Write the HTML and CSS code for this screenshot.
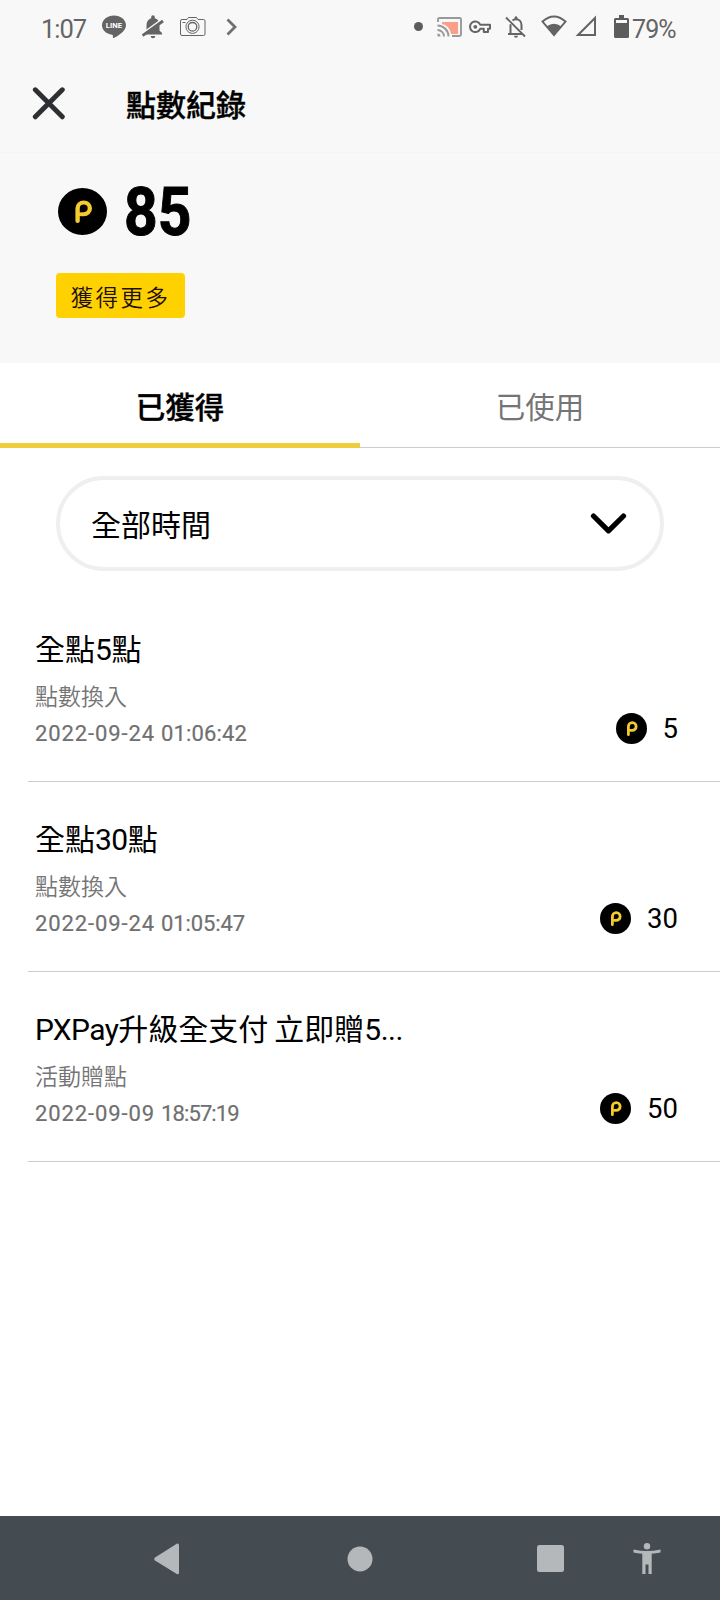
FILE: index.html
```html
<!DOCTYPE html>
<html lang="zh-Hant">
<head>
<meta charset="utf-8">
<title>點數紀錄</title>
<link rel="stylesheet" href="styles.css">
</head>
<body>
<svg class="defs" width="0" height="0">
  <symbol id="coin" viewBox="0 0 48 48" preserveAspectRatio="none">
    <circle cx="24" cy="24" r="24" fill="#000"/>
    <path d="M19.200 33.600V20.800a6 6 0 1 1 6 6h-2.700" fill="none" stroke="#f4ca2e" stroke-width="4.300" stroke-linecap="round" stroke-linejoin="round"/>
  </symbol>
</svg>
<div class="screen">
  <div class="status">
    <div class="status-left">
      <span class="clock">1:07</span>
      <svg class="i-line" width="24" height="24" viewBox="0 0 24 24"><path d="M12 .5C5.400.5 0 4.800 0 10.200c0 4.800 4.300 8.700 10 9.500.9.200 1 .7.900 1.800-.1 1.200 0 1.700.8 1.400C14.500 21.800 24 16.500 24 10.200 24 4.800 18.600.5 12 .5z" fill="#646464"/><text x="12" y="13" text-anchor="middle" class="line-text">LINE</text></svg>
      <svg class="i-bell" width="22" height="24" viewBox="0 0 22 24"><path d="M2 19.500 4.500 15.500V10.500C4.500 6.500 6.300 4 9.200 3.200V2a1.800 1.800 0 0 1 3.600 0v1.200c2.700.7 4.700 2.900 4.700 7V15.500L20 18v1.500zM8.700 21h4.600a2.300 2.300 0 0 1-4.600 0z" fill="#646464"/><path d="M1.500 17.800 20.500 4" stroke="#f8f8f8" stroke-width="2"/><path d="M.5 20.500 21 6" stroke="#646464" stroke-width="2.800"/></svg>
      <svg class="i-cam" width="26" height="20" viewBox="0 0 26 20" fill="none" stroke="#646464" stroke-width="1"><path d="M2 2.500H7l1.500-2h8L18 2.500h5.500q1.500 0 1.500 1.500V17q0 1.500-1.500 1.500H2Q.5 18.500.5 17V4Q.5 2.500 2 2.500zM2.500 5.500h3"/><circle cx="12.500" cy="9.800" r="6.600"/><circle cx="12.500" cy="9.800" r="4.300" stroke-width="1.300"/></svg>
      <svg class="i-more" width="12" height="18" viewBox="0 0 12 18" fill="none" stroke="#707070" stroke-width="2.800"><path d="M1.500 1.500 9 9l-7.500 7.500"/></svg>
    </div>
    <div class="status-right">
      <span class="dot"></span>
      <svg class="i-cast" width="25" height="21" viewBox="0 0 25 21"><path d="M5 5h16v12h-7C13.500 12 10 8 5 7z" fill="#fb9f88"/><path d="M1 5V2.500Q1 1 2.500 1h20Q24 1 24 2.500v15q0 1.500-1.500 1.500H15M.5 8.500A11 11 0 0 1 11.500 19.500M.5 13A6.500 6.500 0 0 1 7 19.500" fill="none" stroke="#999" stroke-width="1.900"/><path d="M.5 16.500a3 3 0 0 1 3 3h-3z" fill="#999"/></svg>
      <svg class="i-key" width="22" height="14" viewBox="0 0 22 14"><path d="M11.200 4.700H21v4.100h-2V12h-4.200V8.800h-3.600A5.300 5.300 0 1 1 11.200 4.700z" fill="none" stroke="#646464" stroke-width="2" stroke-linejoin="round"/><circle cx="6.300" cy="6.800" r="1.900" fill="#646464"/></svg>
      <svg class="i-mute" width="21" height="22" viewBox="0 0 21 22"><path d="M5.500 18V8.200M7.500 4.500C9 3.200 9.500 3.200 11 3.200c3.300 0 5.500 2.600 5.500 6V14M3 18h14" fill="none" stroke="#646464" stroke-width="2"/><path d="M9.500 3V1.800a1.500 1.500 0 0 1 3 0V3zM9 19.700h4a2 2 0 0 1-4 0z" fill="#646464"/><path d="m1 1.500 19 19" stroke="#646464" stroke-width="1.900"/></svg>
      <svg class="i-wifi" width="26" height="22" viewBox="0 0 26 22"><path d="M1.500 6.500Q13-3.500 24.500 6.500L13 20z" fill="none" stroke="#646464" stroke-width="1.900"/><path d="M5.500 11.500q7.500-5.500 15 0L13 21z" fill="#646464"/></svg>
      <svg class="i-cell" width="22" height="22" viewBox="0 0 22 22"><path d="M20 3v17H3z" fill="none" stroke="#646464" stroke-width="2"/></svg>
      <svg class="i-batt" width="15" height="24" viewBox="0 0 15 24"><path d="M5 0h5v3h3.500Q15 3 15 4.500v17Q15 23 13.500 23h-12Q0 23 0 21.500v-17Q0 3 1.500 3H5z" fill="#5c5c5c"/><path d="M2 5h11v3H2z" fill="#f8f8f8"/></svg>
      <span class="percent">79%</span>
    </div>
  </div>
  <header class="header">
    <svg class="close" width="33" height="33" viewBox="0 0 33 33"><path d="m3.300 2.800 27 27m0-27-27 27" stroke="#2d2f32" stroke-width="4.900" stroke-linecap="round"/></svg>
    <h1 class="title">點數紀錄</h1>
  </header>
  <section class="summary">
    <div class="balance">
      <svg class="coin-large"><use href="#coin"/></svg>
      <span class="balance-value">85</span>
    </div>
    <button class="more">獲得更多</button>
  </section>
  <nav class="tabs">
    <div class="tab active">已獲得</div>
    <div class="tab">已使用</div>
  </nav>
  <div class="select">
    <span class="select-label">全部時間</span>
    <svg width="37" height="22" viewBox="0 0 37 22"><path d="m3.500 3 15 14.800L33.500 3" fill="none" stroke="#000" stroke-width="5.200" stroke-linecap="round" stroke-linejoin="round"/></svg>
  </div>
  <main class="list">
    <article class="item">
      <div class="info">
        <h2 class="name">全點<span class="latin">5</span>點</h2>
        <div class="kind">點數換入</div>
        <div class="when"><span class="date">2022-09-24</span><span class="time">01:06:42</span></div>
      </div>
      <div class="points"><svg class="coin"><use href="#coin"/></svg><span>5</span></div>
    </article>
    <article class="item">
      <div class="info">
        <h2 class="name">全點<span class="latin">30</span>點</h2>
        <div class="kind">點數換入</div>
        <div class="when"><span class="date">2022-09-24</span><span class="time tight">01:05:47</span></div>
      </div>
      <div class="points"><svg class="coin"><use href="#coin"/></svg><span>30</span></div>
    </article>
    <article class="item">
      <div class="info">
        <h2 class="name"><span class="brand">PXPay</span>升級全支付 <span class="offer">立即贈<span class="latin">5...</span></span></h2>
        <div class="kind">活動贈點</div>
        <div class="when"><span class="date">2022-09-09</span><span class="time tighter">18:57:19</span></div>
      </div>
      <div class="points"><svg class="coin"><use href="#coin"/></svg><span>50</span></div>
    </article>
  </main>
  <footer class="navbar">
    <svg class="n-back" width="26" height="32" viewBox="0 0 26 32"><path d="M1 14.500 22.800.8Q25 0 25 2.500v27q0 2.500-2.200 1.500L1 17.500Q-.5 16 1 14.500z"/></svg>
    <svg class="n-home" width="26" height="26" viewBox="0 0 26 26"><circle cx="13" cy="13" r="12.500"/></svg>
    <svg class="n-recent" width="27" height="27" viewBox="0 0 27 27"><rect width="27" height="27" rx="2.500"/></svg>
    <svg class="n-access" width="28" height="32" viewBox="0 0 28 32"><circle cx="14" cy="3.200" r="3.200"/><path d="M.5 6.500q13.500 3 27 0v3Q23 10.500 18.700 10.800V31h-3.200V21.500h-3V31H9.300V10.800Q4.500 10.500.5 9.500z"/></svg>
  </footer>
</div>
</body>
</html>
```
FILE: styles.css
```css
* { box-sizing: border-box; }
body { margin: 0; background: #fff; font-family: Roboto, "Noto Sans CJK TC", sans-serif; color: #000; }
h1, h2 { margin: 0; }
svg { display: block; flex: none; }
.defs { position: absolute; }
.screen { width: 720px; height: 1600px; display: flex; flex-direction: column; background: #fff; }

.status { height: 56px; background: #f8f8f8; display: flex; justify-content: space-between; padding: 0 42px 0 41px; color: #646464; }
.status-left, .status-right { display: flex; align-items: center; height: 54px; }
.clock { font-size: 25.500px; letter-spacing: -1px; width: 61px; padding-top: 4px; }
.line-text { font: 700 7.800px Roboto, sans-serif; fill: #fff; }
.i-bell { margin-left: 16px; }
.i-cam { margin-left: 16px; }
.i-more { margin-left: 20px; }
.dot { width: 9px; height: 9px; border-radius: 50%; background: #5c5c5c; margin-right: 14px; margin-top: -2px; }
.i-key { margin-left: 7px; }
.i-mute { margin-left: 14px; }
.i-wifi { margin-left: 15px; margin-top: -2px; }
.i-cell { margin-left: 8px; margin-top: -2px; }
.i-batt { margin-left: 17px; margin-top: -1px; }
.percent { font-size: 25px; letter-spacing: -.9px; width: 46px; margin-left: 3px; padding-top: 5px; white-space: nowrap; }

.header { height: 96px; background: #f8f8f8; display: flex; align-items: flex-start; padding: 31px 0 0 32px; gap: 61px; }
.title { font-size: 30px; font-weight: 500; line-height: 38px; -webkit-text-stroke: .4px #000; }
.summary { height: 211px; background: #f8f8f8; border-top: 1px solid #f5f5f5; padding: 30px 0 0 56px; }
.balance { height: 56px; display: flex; align-items: center; gap: 17px; padding-left: 2px; }
.coin-large { width: 49px; height: 47px; }
.balance-value { font-size: 66px; font-weight: 700; line-height: 56px; padding-top: 4px; transform: scaleX(.89); transform-origin: left; -webkit-text-stroke: 1px #000; }
.more { display: block; margin-top: 34px; width: 129px; height: 45px; border: 0; border-radius: 4px; background: #ffd100; color: #1c1008; font: 350 22.500px/46px "Noto Sans CJK TC", sans-serif; letter-spacing: 2.500px; padding: 0; white-space: nowrap; }

.tabs { height: 85px; display: grid; grid-template: 85px / 1fr 1fr; }
.tab { border-bottom: 1px solid #ccc; text-align: center; font-size: 29.500px; line-height: 90px; color: #757575; }
.tab.active { color: #000; font-weight: 500; border-bottom: 5px solid #f0cd3c; -webkit-text-stroke: .4px #000; }
.select { margin: 28px 56px 0; height: 95px; border: 4px solid #efefef; border-radius: 48px; display: flex; align-items: center; justify-content: space-between; padding: 0 33px 0 31px; font-size: 30px; line-height: 44px; }
.select-label { padding-top: 4px; }

.list { padding-left: 28px; margin-top: 21px; flex: 1; }
.item { height: 190px; border-bottom: 1px solid #ccc; display: flex; justify-content: space-between; padding: 36px 42px 0 7px; }
.name { font-size: 30px; font-weight: 400; line-height: 44px; white-space: nowrap; }
.brand { letter-spacing: -.6px; }
.latin { letter-spacing: -.5px; }
.offer { margin-left: -1.500px; }
.kind { margin-top: 9px; font-size: 23px; line-height: 34px; color: #757575; font-weight: 350; }
.when { display: flex; gap: 6px; font-size: 22px; line-height: 38px; color: #707070; -webkit-text-stroke: .2px #707070; }
.date { letter-spacing: .9px; }
.time { letter-spacing: .15px; }
.tight { letter-spacing: -.1px; }
.tighter { letter-spacing: -.9px; }
.points { display: flex; align-items: center; height: 32px; margin-top: 84px; gap: 16px; font-size: 27.500px; }
.coin { width: 31px; height: 31px; }

.navbar { height: 84px; background: #454c51; display: flex; align-items: center; padding: 1px 0 0 154px; fill: #b4b8ba; }
.n-home { margin-left: 167px; }
.n-recent { margin-left: 164px; }
.n-access { margin-left: 69px; }
```
